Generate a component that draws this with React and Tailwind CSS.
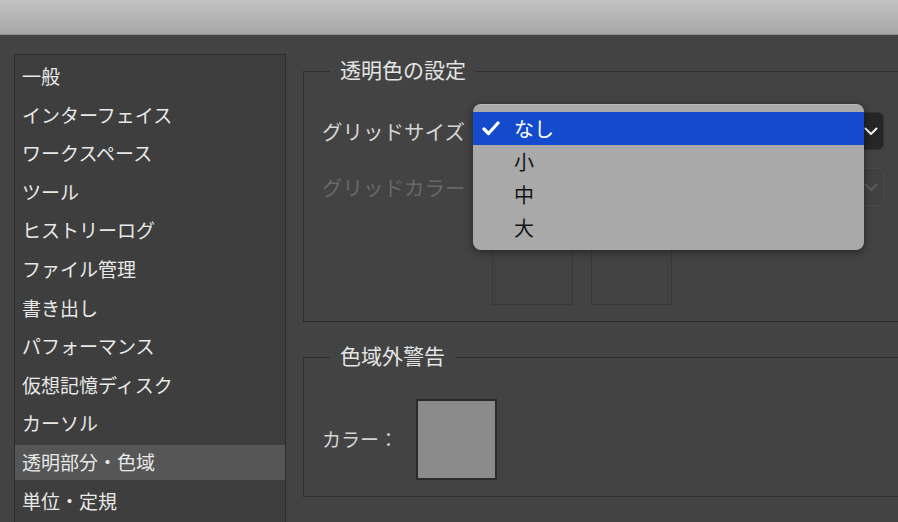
import React from 'react';

const sections = [
  '一般',
  'インターフェイス',
  'ワークスペース',
  'ツール',
  'ヒストリーログ',
  'ファイル管理',
  '書き出し',
  'パフォーマンス',
  '仮想記憶ディスク',
  'カーソル',
  '透明部分・色域',
  '単位・定規',
];

const gridSizes = ['なし', '小', '中', '大'];

const Chevron = ({ color }) => (
  <svg width="14" height="9" viewBox="0 0 14 9" fill="none">
    <path d="M1.5 1.5 L7 7 L12.5 1.5" stroke={color} strokeWidth="2" strokeLinecap="round" strokeLinejoin="round" />
  </svg>
);

const Check = () => (
  <svg width="18" height="15" viewBox="0 0 18 15" fill="none">
    <path d="M2 8 L6.5 12.5 L16 2" stroke="white" strokeWidth="3.2" strokeLinecap="round" strokeLinejoin="round" />
  </svg>
);

const App = () => {
  const selected = '透明部分・色域';

  return (
    <div className="relative w-[898px] h-[522px] overflow-hidden bg-[#434343] font-['Noto_Sans_CJK_JP',sans-serif]">
      {/* window title strip */}
      <div className="h-[35px] bg-gradient-to-b from-[#c2c2c2] to-[#a7a7a7] border-b border-[#8a8a8a]" />

      <div className="flex">
        {/* section list */}
        <div className="ml-[14px] mt-[19px] w-[272px] h-[480px] shrink-0 border border-[#2d2d2d] bg-[#3e3e3e] pt-[2px]">
          {sections.map((name) => (
            <div key={name} className="h-[38.6px] flex items-center">
              <div
                className={`w-full h-[35px] flex items-center pl-[7px] text-[19px] text-[#e8e8e8] ${
                  name === selected ? 'bg-[#565656]' : ''
                }`}
              >
                {name}
              </div>
            </div>
          ))}
        </div>

        {/* settings */}
        <div className="ml-[17px] mt-[19.5px] w-[620px] shrink-0">
          <fieldset className="border border-[#2e2e2e] pl-[18px] pb-[16px]">
            <legend className="ml-[8px] px-[10px] pb-[5px] text-[21px] leading-[28px] text-[#e4e4e4]">透明色の設定</legend>
            <div className="mt-[24.5px] flex items-center">
              <div className="w-[156px] text-[20.5px] text-[#d4d4d4]">グリッドサイズ</div>
              <div className="w-[406px] h-[38px] rounded-[6px] bg-[#262626] border border-[#323232] flex items-center justify-end pr-[5px]">
                <Chevron color="#f2f2f2" />
              </div>
            </div>
            <div className="mt-[18px] flex items-center">
              <div className="w-[156px] text-[20.5px] text-[#686868]">グリッドカラー</div>
              <div className="w-[406px] h-[38px] rounded-[6px] bg-[#414141] border border-[#4a4a4a] flex items-center justify-end pr-[5px]">
                <Chevron color="#5c5c5c" />
              </div>
            </div>
            <div className="mt-[18px] ml-[170px] flex gap-[18px]">
              <div className="w-[81px] h-[81px] border border-[#393939] bg-[#424242]" />
              <div className="w-[81px] h-[81px] border border-[#393939] bg-[#424242]" />
            </div>
          </fieldset>

          <fieldset className="mt-[18.5px] border border-[#2e2e2e] pl-[18px] pb-[16px]">
            <legend className="ml-[8px] px-[10px] pb-[5px] text-[21px] leading-[28px] text-[#e4e4e4]">色域外警告</legend>
            <div className="mt-[25.5px] flex items-center">
              <div className="w-[94px] text-[19px] text-[#d4d4d4]">カラー：</div>
              <div className="w-[81px] h-[81px] border-2 border-[#2a2a2a] bg-[#8a8a8a]" />
            </div>
          </fieldset>
        </div>
      </div>

      {/* open popup menu */}
      <div className="absolute left-[473px] top-[104px] w-[391px] h-[146px] rounded-[8px] bg-[#a9a9a9] border-t border-[#b8b8b8] shadow-[0_2px_8px_rgba(0,0,0,0.45)] pt-[7px]">
        {gridSizes.map((size, i) => (
          <div
            key={size}
            className={`h-[33px] flex items-center text-[20px] ${i === 0 ? 'bg-[#134bcc] text-white' : 'text-[#141414]'}`}
          >
            <div className="w-[41px] pl-[9px] flex items-center">{i === 0 && <Check />}</div>
            <span>{size}</span>
          </div>
        ))}
      </div>
    </div>
  );
};

export default App;
